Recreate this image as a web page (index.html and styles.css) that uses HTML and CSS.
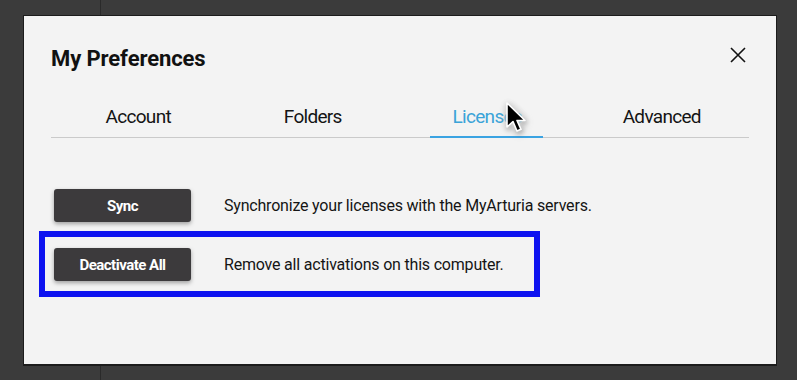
FILE: index.html
```html
<!DOCTYPE html>
<html lang="en">
<head>
    <meta charset="UTF-8">
    <title>My Preferences</title>
    <link rel="stylesheet" href="styles.css">
</head>
<body>
    <div class="backdrop-line"></div>

    <div class="dialog">
        <div class="header">
            <h1 class="title">My Preferences</h1>
            <button class="close" aria-label="Close">
                <svg width="16" height="16" viewBox="0 0 16 16">
                    <path d="M1 1 L15 15 M15 1 L1 15" stroke="#111" stroke-width="1.6" fill="none"/>
                </svg>
            </button>
        </div>

        <!-- tabs -->
        <div class="tabs">
            <div class="tab">Account</div>
            <div class="tab">Folders</div>
            <div class="tab active">Licenses</div>
            <div class="tab">Advanced</div>
        </div>

        <!-- licenses panel -->
        <div class="panel">
            <div class="row">
                <button class="btn">Sync</button>
                <span class="desc">Synchronize your licenses with the MyArturia servers.</span>
            </div>
            <div class="row">
                <button class="btn">Deactivate All</button>
                <span class="desc">Remove all activations on this computer.</span>
            </div>
        </div>

        <div class="highlight"></div>

        <svg class="cursor" width="26" height="34" viewBox="0 0 26 34">
            <path d="M3 2 L3 26 L9 20.5 L13 30 L17 28.3 L13 19.5 L21 19.5 Z"
                  fill="#000" stroke="#fff" stroke-width="1.6" stroke-linejoin="round"/>
        </svg>
    </div>
</body>
</html>
```

FILE: styles.css
```css
* {
    margin: 0;
    padding: 0;
    box-sizing: border-box;
}

body {
    background: #3b3b3b;
    font-family: Roboto, "Liberation Sans", sans-serif;
    padding: 15px 0 0 23px;
    height: 380px;
    overflow: hidden;
    position: relative;
}

.backdrop-line {
    position: absolute;
    left: 100px;
    top: 0;
    width: 1px;
    height: 380px;
    background: #2a2a2a;
}

.dialog {
    position: relative;
    width: 754px;
    height: 351px;
    background: #f3f3f3;
    border: 1px solid #1c1c1c;
    border-bottom: 2px solid #1c1c1c;
    padding: 0 27px;
}

/* header */
.header {
    display: flex;
    justify-content: space-between;
    align-items: flex-start;
    padding-top: 30px;
}
.title {
    font-size: 22px;
    line-height: 26px;
    font-weight: 700;
    color: #111;
    letter-spacing: -0.1px;
}
.close {
    border: none;
    background: none;
    margin-top: 1px;
    margin-right: 3px;
    width: 16px;
    height: 16px;
}

/* tabs */
.tabs {
    display: grid;
    grid-template-columns: repeat(4, 1fr);
    margin-top: 33px;
    border-bottom: 1px solid #cacaca;
}
.tab {
    position: relative;
    text-align: center;
    font-size: 19px;
    line-height: 24px;
    padding-bottom: 8px;
    color: #141414;
    letter-spacing: -0.7px;
}
.tab.active {
    color: #3aa3d8;
}
.tab.active::after {
    content: "";
    position: absolute;
    left: 50%;
    bottom: -1px;
    width: 113px;
    margin-left: -57px;
    height: 2px;
    background: #3aa3e2;
}

/* panel */
.panel {
    display: flex;
    flex-direction: column;
    gap: 26px;
    padding: 51px 0 0 3px;
}
.row {
    display: flex;
    align-items: center;
    gap: 33px;
}
.btn {
    width: 137px;
    height: 33px;
    background: #3c3a3c;
    color: #fff;
    border: none;
    border-radius: 3px;
    box-shadow: 0 2px 4px rgba(0,0,0,0.35);
    font-family: Roboto, "Liberation Sans", sans-serif;
    font-weight: 700;
    font-size: 15px;
    letter-spacing: -0.5px;
}
.desc {
    font-size: 16px;
    color: #151515;
    letter-spacing: -0.2px;
}

/* annotation + pointer */
.highlight {
    position: absolute;
    left: 15px;
    top: 215px;
    width: 501px;
    height: 66px;
    border: 6px solid #0d12f0;
}
.cursor {
    position: absolute;
    left: 480px;
    top: 85px;
    filter: drop-shadow(0 0 3px rgba(240,240,240,1)) drop-shadow(1px 2px 2px rgba(0,0,0,0.4));
}
```
